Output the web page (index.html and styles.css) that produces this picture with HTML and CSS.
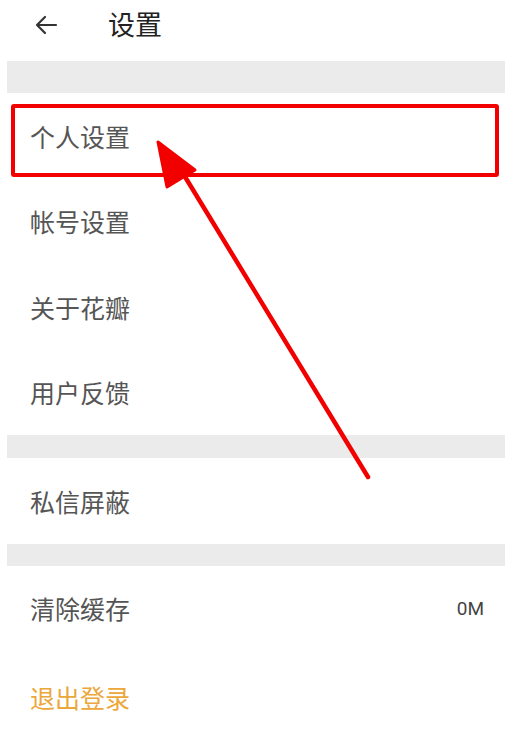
FILE: index.html
```html
<!DOCTYPE html>
<html lang="zh-CN">
<head>
<meta charset="utf-8">
<title>设置</title>
<link rel="stylesheet" href="styles.css">
</head>
<body>
<div class="page">
  <header class="topbar">
    <svg class="back" width="24" height="20" viewBox="0 0 24 20"><path d="M22 10H3M11 2L3 10L11 18" fill="none" stroke="#333" stroke-width="2.2" stroke-linecap="round" stroke-linejoin="round"/></svg>
    <h1 class="title">设置</h1>
  </header>
  <div class="band band-top"></div>
  <div class="row">个人设置</div>
  <div class="row">帐号设置</div>
  <div class="row">关于花瓣</div>
  <div class="row">用户反馈</div>
  <div class="band band-mid"></div>
  <div class="row">私信屏蔽</div>
  <div class="band band-low"></div>
  <div class="row row-split"><span>清除缓存</span><span class="value">0M</span></div>
  <div class="row row-logout">退出登录</div>

  <div class="highlight"></div>
  <svg class="pointer" width="505" height="731" viewBox="0 0 505 731">
    <line x1="368" y1="477" x2="176" y2="162" stroke="#f20000" stroke-width="4.5" stroke-linecap="round"/>
    <polygon points="158,142 195,170 167,187" fill="#f20000" stroke="#f20000" stroke-width="3" stroke-linejoin="round"/>
  </svg>
</div>
</body>
</html>
```
FILE: styles.css
```css
html, body {
  margin: 0;
  padding: 0;
  background: #fff;
}
body {
  font-family: "Noto Sans CJK SC", "Noto Sans", sans-serif;
}
.page {
  position: relative;
  width: 505px;
  height: 731px;
  overflow: hidden;
  padding-left: 7px;
  box-sizing: border-box;
}
.topbar {
  height: 61px;
  display: flex;
  align-items: center;
}
.back {
  margin-left: 27px;
  margin-top: -12px;
}
.title {
  margin: 0 0 0 50px;
  margin-top: -14px;
  font-size: 27px;
  font-weight: 400;
  color: #222;
}
.band {
  background: #ebebeb;
}
.band-top { height: 32px; }
.band-mid { height: 23px; }
.band-low { height: 22px; }
.row {
  height: 85.5px;
  display: flex;
  align-items: center;
  padding-left: 23px;
  padding-right: 21px;
  font-size: 25px;
  color: #555;
}
.row-split {
  height: 85px;
  justify-content: space-between;
}
.value {
  font-family: Roboto, "Noto Sans", sans-serif;
  font-size: 19px;
  color: #444;
}
.row-logout {
  height: 92px;
  color: #eba73a;
}
.highlight {
  position: absolute;
  left: 11px;
  top: 104px;
  width: 488px;
  height: 73px;
  box-sizing: border-box;
  border: 4.5px solid #f20000;
  border-radius: 3px;
}
.pointer {
  position: absolute;
  left: 0;
  top: 0;
}
```
